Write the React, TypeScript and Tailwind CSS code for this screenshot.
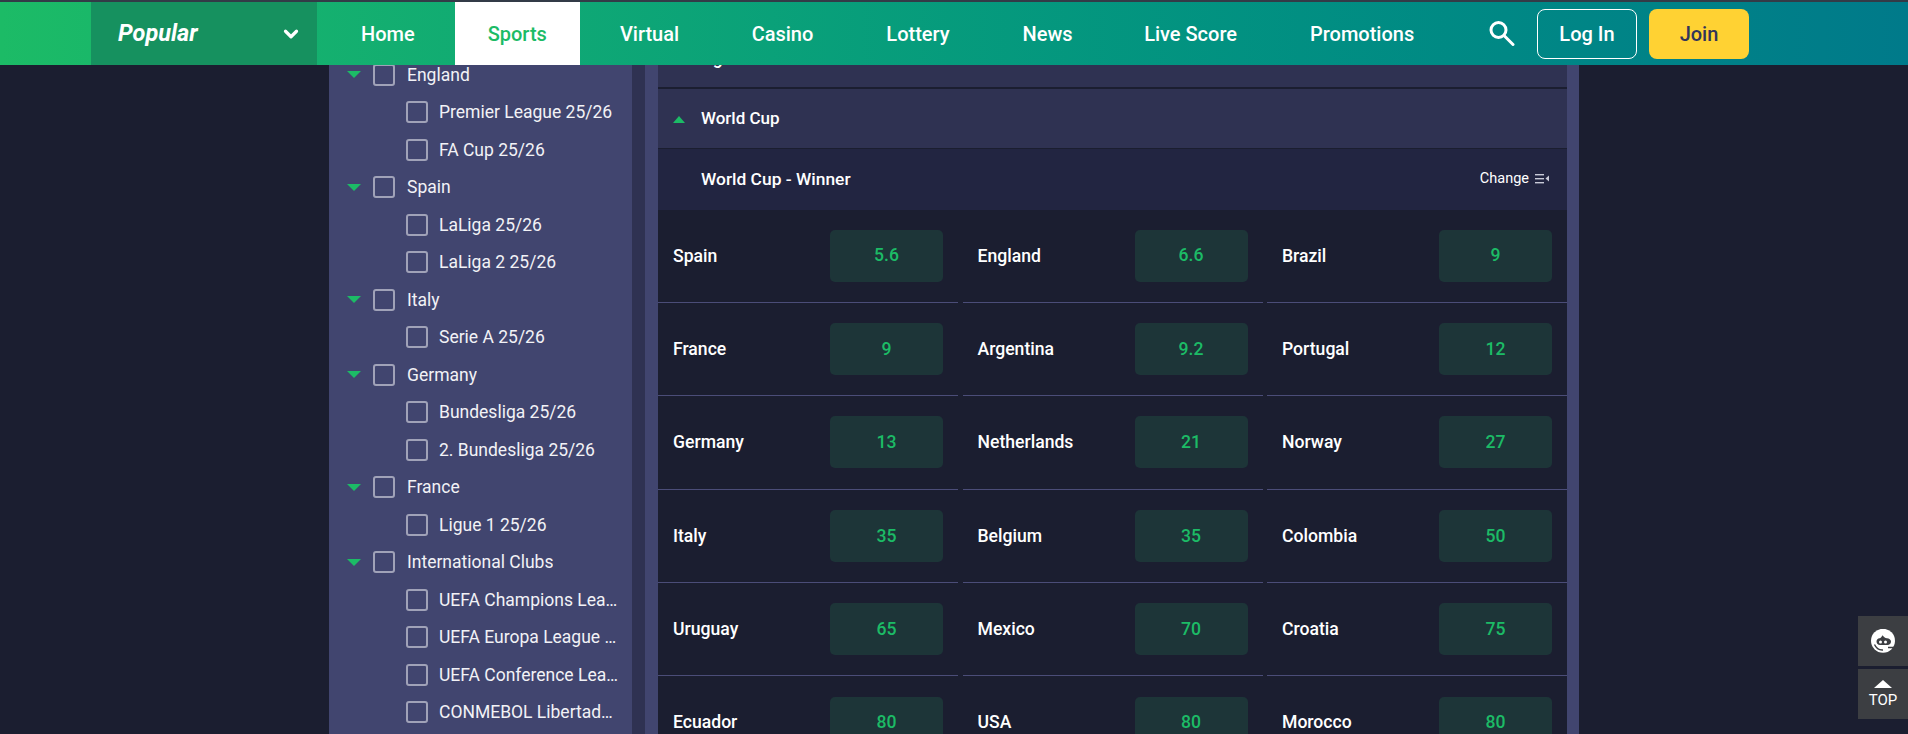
import React from "react";
import { ChevronDown } from "lucide-react";

const navItems = [
  { label: "Home", cls: "pl-[44px] pr-[40px]" },
  { label: "Sports", cls: "px-[33px] bg-white text-[#1cbb66]" },
  { label: "Virtual", cls: "pl-[40px] pr-[36px]" },
  { label: "Casino", cls: "px-[36.5px]" },
  { label: "Lottery", cls: "px-[36.5px]" },
  { label: "News", cls: "pl-[36.5px] pr-[35px]" },
  { label: "Live Score", cls: "px-[36.5px]" },
  { label: "Promotions", cls: "px-[36.5px]" },
];

const tree = [
  { name: "England", kids: ["Premier League 25/26", "FA Cup 25/26"] },
  { name: "Spain", kids: ["LaLiga 25/26", "LaLiga 2 25/26"] },
  { name: "Italy", kids: ["Serie A 25/26"] },
  { name: "Germany", kids: ["Bundesliga 25/26", "2. Bundesliga 25/26"] },
  { name: "France", kids: ["Ligue 1 25/26"] },
  {
    name: "International Clubs",
    kids: [
      "UEFA Champions League 25/26",
      "UEFA Europa League 25/26",
      "UEFA Conference League 25/26",
      "CONMEBOL Libertadores 2026",
    ],
  },
];

const odds = [
  ["Spain", "5.6"],
  ["England", "6.6"],
  ["Brazil", "9"],
  ["France", "9"],
  ["Argentina", "9.2"],
  ["Portugal", "12"],
  ["Germany", "13"],
  ["Netherlands", "21"],
  ["Norway", "27"],
  ["Italy", "35"],
  ["Belgium", "35"],
  ["Colombia", "50"],
  ["Uruguay", "65"],
  ["Mexico", "70"],
  ["Croatia", "75"],
  ["Ecuador", "80"],
  ["USA", "80"],
  ["Morocco", "80"],
];

const Checkbox = () => (
  <span className="block w-[22px] h-[22px] shrink-0 rounded-[3px] border-2 border-[#a0a2b8]" />
);

const Header = () => (
  <header className="relative z-10 shrink-0 h-[65px] border-t-2 border-[#333b47] flex items-stretch bg-gradient-to-r from-[#1cbb66] to-[#007a8a] text-white">
    <div className="w-[91px]" />
    <div className="w-[226px] bg-[#16915f] flex items-center justify-between pl-[27px] pr-[15px]">
      <span className="text-[23.5px] font-bold italic">Popular</span>
      <ChevronDown size={22} strokeWidth={3.5} />
    </div>
    <nav className="flex items-stretch text-[20px] font-medium">
      {navItems.map((item) => (
        <a key={item.label} className={`flex items-center ${item.cls}`}>
          {item.label}
        </a>
      ))}
    </nav>
    <div className="ml-auto flex items-center pr-[159px]">
      <svg width="26" height="25" viewBox="0 0 26 25" fill="none" stroke="#fff" strokeWidth="3" className="mr-[22px] -mt-[1px]">
        <circle cx="9.500" cy="9" r="7.500" />
        <path d="M15 14.500l9 9" strokeLinecap="round" />
      </svg>
      <button className="w-[100px] h-[50px] rounded-[8px] border border-white text-[20px] font-medium">
        Log In
      </button>
      <button className="ml-[12px] w-[100px] h-[50px] rounded-[8px] bg-[#ffd233] text-[#32345a] text-[20px] font-medium">
        Join
      </button>
    </div>
  </header>
);

const Sidebar = () => (
  <aside className="w-[303px] shrink-0 -mt-[9px] bg-[#41456f] text-[#f2f2f6] text-[17.5px] pl-[18px] pr-[12px]">
    {tree.map((group) => (
      <div key={group.name}>
        <div className="flex items-center h-[37.5px]">
          <span className="w-0 h-0 border-x-[7px] border-x-transparent border-t-[7px] border-t-[#1cbb66]" />
          <span className="ml-[12px]"><Checkbox /></span>
          <span className="ml-[12px] truncate">{group.name}</span>
        </div>
        {group.kids.map((kid) => (
          <div key={kid} className="flex items-center h-[37.5px] pl-[59px]">
            <Checkbox />
            <span className="ml-[11px] truncate">{kid}</span>
          </div>
        ))}
      </div>
    ))}
  </aside>
);

const OddsCell = ({ name, price }: { name: string; price: string }) => (
  <div className="h-[93.4px] border-b border-[#4b4d78] flex items-center justify-between px-[15px]">
    <span className="text-[17.6px] font-medium text-white">{name}</span>
    <span className="w-[113px] h-[52px] rounded-[5px] bg-[#1d3538] text-[#1cbb66] text-[17.6px] font-medium flex items-center justify-center">
      {price}
    </span>
  </div>
);

const Main = () => (
  <main className="flex-1 bg-[#1b1e30] text-white">
    <div className="h-[24px] bg-[#2f3252] border-b-2 border-[#1b1e30] overflow-hidden">
      <div className="-mt-[37px] h-[60px] flex items-center pl-[43px] text-[17.6px] font-medium">
        Ag
      </div>
    </div>
    <div className="h-[60px] pt-[1px] bg-[#2f3252] border-b border-[#1b1e30] flex items-center pl-[15px] text-[17px] font-medium">
      <span className="w-0 h-0 border-x-[6px] border-x-transparent border-b-[7px] border-b-[#1cbb66]" />
      <span className="ml-[16px]">World Cup</span>
    </div>
    <div className="h-[60.5px] bg-[#222541] flex items-center justify-between pl-[43px] pr-[18px] text-[17.4px] font-medium">
      <span>World Cup - Winner</span>
      <span className="flex items-center text-[14.5px] font-normal">
        Change
        <svg width="14" height="12" viewBox="0 0 14 12" className="ml-[6px] text-[#c9cad8]" fill="currentColor">
          <rect x="0" y="1" width="9" height="1.400" />
          <rect x="0" y="5" width="9" height="1.400" />
          <rect x="0" y="9" width="9" height="1.400" />
          <path d="M14 2.500v6L10.500 5.500z" />
        </svg>
      </span>
    </div>
    <div className="grid grid-cols-3 gap-x-[4.5px]">
      {odds.map(([name, price]) => (
        <OddsCell key={name} name={name} price={price} />
      ))}
    </div>
  </main>
);

const SideButtons = () => (
  <div className="absolute right-0 bottom-[15px] flex flex-col gap-[3px]">
    <button className="w-[50px] h-[50px] bg-[#3c3e42] flex items-center justify-center">
      <svg width="26" height="24" viewBox="0 0 26 24">
        <circle cx="13" cy="11.800" r="12" fill="#fff" />
        <path fill="#3c3e42" d="M6.500 12.500c0-2 1.300-3 3-3.200 1.300-.2 2.200-1.500 3-3 1 1.600 2.500 2.800 4.500 3 2 .2 4 1.200 4 3.200 0 2.300-1.500 3.500-3.500 3.500H10c-2 0-3.500-1.300-3.500-3.500z" />
        <circle cx="10.500" cy="13" r="1.500" fill="#fff" />
        <circle cx="15.500" cy="13" r="1.500" fill="#fff" />
        <path d="M4.500 15.500C6.500 20 9.500 21.300 13 21M18 18.500h8" fill="none" stroke="#3c3e42" strokeWidth="1.400" />
      </svg>
    </button>
    <button className="w-[50px] h-[50px] bg-[#3c3e42] flex flex-col items-center justify-center text-white text-[15px] leading-[16px]">
      <span className="w-0 h-0 border-x-[9px] border-x-transparent border-b-[8px] border-b-white mb-[4px]" />
      TOP
    </button>
  </div>
);

export default function App() {
  return (
    <div className="relative h-screen flex flex-col overflow-hidden bg-[#1b1e30] font-[Roboto,sans-serif]">
      <Header />
      <div className="flex-1 min-h-0 overflow-hidden">
        <div className="ml-[329px] w-[1250px] flex">
          <Sidebar />
          <div className="w-[13px] shrink-0 bg-[#2f3252]" />
          <div className="w-[934px] flex border-l-[13px] border-r-[12px] border-[#41456f]">
            <Main />
          </div>
        </div>
      </div>
      <SideButtons />
    </div>
  );
}
